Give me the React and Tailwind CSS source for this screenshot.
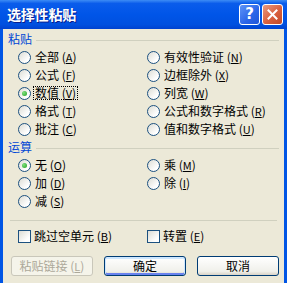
import React from 'react';

const font = { fontFamily: '"Noto Sans CJK SC", "Noto Sans", sans-serif' };

const Radio = ({ label, mnemonic, checked, focused }) => (
   <div className="h-[18px] flex items-center">
      <span className="w-[13px] h-[13px] rounded-full border border-[#1C5180] bg-[linear-gradient(135deg,#DCDCD4,#FFFFFF_75%)] flex items-center justify-center shrink-0">
         {checked && <span className="w-[5px] h-[5px] rounded-full bg-[radial-gradient(circle_at_35%_35%,#7FE07F,#21A121)]"></span>}
      </span>
      <span className={`ml-[2px] px-[1px] leading-[12px] text-[12px] text-black whitespace-nowrap border ${focused ? 'border-dotted border-black' : 'border-transparent'}`}>
         {label} (<span className="underline text-[11px]">{mnemonic}</span>)
      </span>
   </div>
);

const Checkbox = ({ label, mnemonic }) => (
   <div className="h-[18px] flex items-center">
      <span className="w-[13px] h-[13px] border border-[#1C5180] bg-[linear-gradient(135deg,#DCDCD4,#FFFFFF_75%)] shrink-0"></span>
      <span className="ml-[3px] text-[12px] leading-[12px] text-black whitespace-nowrap">
         {label} (<span className="underline text-[11px]">{mnemonic}</span>)
      </span>
   </div>
);

const GroupLabel = ({ children }) => (
   <div className="flex items-center h-[12px]">
      <span className="text-[12px] leading-[12px] text-[#0046D5] whitespace-nowrap">{children}</span>
      <span className="ml-[4px] mt-[3px] flex-1 h-[2px] border-t border-[#D0D0BF] border-b-white"></span>
   </div>
);

const App = () => {
   return (
      <div className="w-[287px] h-[283px] flex flex-col bg-[#ECE9D8] overflow-hidden" style={font}>
         <div className="h-[29px] flex items-center pl-[7px] pr-[4px] bg-[linear-gradient(to_bottom,#3D8CF5_0%,#0A5CEB_12%,#0055E8_50%,#0050DF_85%,#0042CF_100%)]">
            <span className="text-white font-bold text-[14px] tracking-[-0.2px] [text-shadow:1px_1px_0_#0A1E8C]">选择性粘贴</span>
            <div className="ml-auto flex gap-[2px]">
               <div className="w-[21px] h-[21px] rounded-[3px] border border-white bg-[linear-gradient(135deg,#5E95F7,#2A64E8_60%,#1F55D8)] flex items-center justify-center">
                  <span className="text-white font-bold text-[15px] leading-none" style={{ fontFamily: '"DejaVu Sans", sans-serif' }}>?</span>
               </div>
               <div className="w-[21px] h-[21px] rounded-[3px] border border-white bg-[linear-gradient(135deg,#E89A80,#D9603E_55%,#C24A28)] flex items-center justify-center">
                  <svg width="11" height="11" viewBox="0 0 11 11">
                     <path d="M1.5 1.5 L9.5 9.5 M9.5 1.5 L1.5 9.5" stroke="white" strokeWidth="2" strokeLinecap="square" />
                  </svg>
               </div>
            </div>
         </div>
         <div className="flex-1 border-x-[3px] border-[#0055E5] pl-[5px] pr-[5px] pt-[4px] flex flex-col">
            <GroupLabel>粘贴</GroupLabel>
            <div className="mt-[3px] pl-[10px] grid grid-cols-[129px_1fr]">
               <div className="flex flex-col">
                  <Radio label="全部" mnemonic="A" />
                  <Radio label="公式" mnemonic="F" />
                  <Radio label="数值" mnemonic="V" checked focused />
                  <Radio label="格式" mnemonic="T" />
                  <Radio label="批注" mnemonic="C" />
               </div>
               <div className="flex flex-col">
                  <Radio label="有效性验证" mnemonic="N" />
                  <Radio label="边框除外" mnemonic="X" />
                  <Radio label="列宽" mnemonic="W" />
                  <Radio label="公式和数字格式" mnemonic="R" />
                  <Radio label="值和数字格式" mnemonic="U" />
               </div>
            </div>
            <div className="mt-[3px]">
               <GroupLabel>运算</GroupLabel>
            </div>
            <div className="mt-[3px] pl-[10px] grid grid-cols-[129px_1fr]">
               <div className="flex flex-col">
                  <Radio label="无" mnemonic="O" checked />
                  <Radio label="加" mnemonic="D" />
                  <Radio label="减" mnemonic="S" />
               </div>
               <div className="flex flex-col">
                  <Radio label="乘" mnemonic="M" />
                  <Radio label="除" mnemonic="I" />
               </div>
            </div>
            <div className="mt-[10px] mx-[2px] h-[2px] border-t border-[#D0D0BF] border-b-white"></div>
            <div className="mt-[5px] pl-[10px] grid grid-cols-[129px_1fr]">
               <Checkbox label="跳过空单元" mnemonic="B" />
               <Checkbox label="转置" mnemonic="E" />
            </div>
            <div className="mt-[11px] pl-[3px] flex gap-[11px]">
               <button className="w-[82px] h-[20px] rounded-[3px] border border-[#C9C7BA] bg-[#F5F4EA] text-[12px] leading-none text-[#ACA899] flex items-center justify-center">
                  粘贴链接 (<span className="underline text-[11px]">L</span>)
               </button>
               <button className="w-[82px] h-[20px] rounded-[3px] border border-[#003C74] bg-[linear-gradient(to_bottom,#FFFFFF,#F0F0EA_80%,#D8D2C6)] shadow-[inset_0_1px_0_1px_#CEE7FF,inset_0_-1px_0_1px_#6982EE] text-[12px] leading-none text-black flex items-center justify-center">
                  确定
               </button>
               <button className="w-[82px] h-[20px] rounded-[3px] border border-[#003C74] bg-[linear-gradient(to_bottom,#FFFFFF,#F0F0EA_80%,#D8D2C6)] text-[12px] leading-none text-black flex items-center justify-center">
                  取消
               </button>
            </div>
         </div>
      </div>
   );
};

export default App;
